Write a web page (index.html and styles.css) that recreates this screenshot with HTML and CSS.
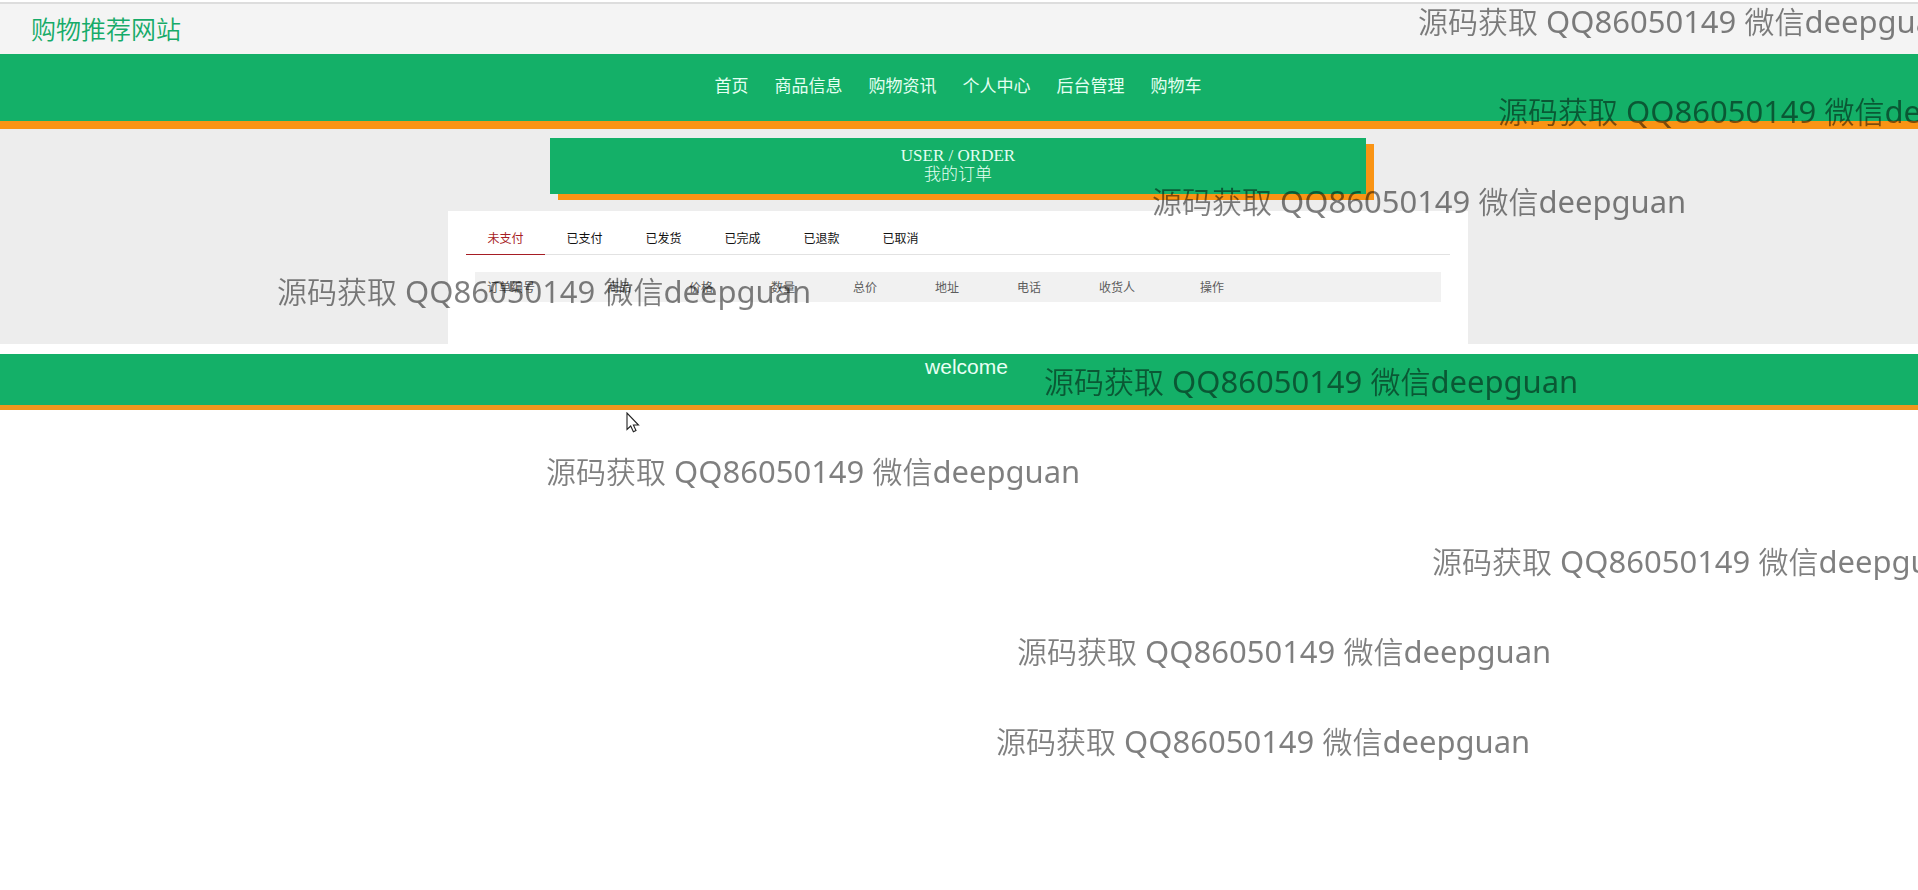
FILE: index.html
```html
<!DOCTYPE html>
<html lang="zh-CN">
<head>
<meta charset="utf-8">
<title>购物推荐网站</title>
<link rel="stylesheet" href="styles.css">
</head>
<body>
<header class="topbar"><a class="brand" href="#">购物推荐网站</a></header>
<nav class="nav" aria-label="主导航">
  <a href="#">首页</a>
  <a href="#">商品信息</a>
  <a href="#">购物资讯</a>
  <a href="#">个人中心</a>
  <a href="#">后台管理</a>
  <a href="#">购物车</a>
</nav>
<main class="main">
  <div class="content">
    <h1 class="title"><span>USER / ORDER</span><span>我的订单</span></h1>
    <section class="panel">
      <div class="tabs" role="tablist">
        <button class="tab tab-active" type="button" role="tab" aria-selected="true">未支付</button>
        <button class="tab" type="button" role="tab">已支付</button>
        <button class="tab" type="button" role="tab">已发货</button>
        <button class="tab" type="button" role="tab">已完成</button>
        <button class="tab" type="button" role="tab">已退款</button>
        <button class="tab" type="button" role="tab">已取消</button>
      </div>
      <table class="orders">
        <colgroup>
          <col class="col-id"><col class="col"><col class="col"><col class="col"><col class="col"><col class="col"><col class="col"><col class="col-name"><col>
        </colgroup>
        <thead>
          <tr><th scope="col">订单编号</th><th scope="col">商品</th><th scope="col">价格</th><th scope="col">数量</th><th scope="col">总价</th><th scope="col">地址</th><th scope="col">电话</th><th scope="col">收货人</th><th scope="col">操作</th></tr>
        </thead>
      </table>
    </section>
  </div>
</main>
<footer class="footer">welcome</footer>

<div class="marks" aria-hidden="true">
  <p class="mark m1">源码获取<span> QQ86050149 </span>微信<span>deepguan</span></p>
  <p class="mark m2">源码获取<span> QQ86050149 </span>微信<span>deepguan</span></p>
  <p class="mark m3">源码获取<span> QQ86050149 </span>微信<span>deepguan</span></p>
  <p class="mark m4">源码获取<span> QQ86050149 </span>微信<span>deepguan</span></p>
  <p class="mark m5">源码获取<span> QQ86050149 </span>微信<span>deepguan</span></p>
  <p class="mark m6">源码获取<span> QQ86050149 </span>微信<span>deepguan</span></p>
  <p class="mark m7">源码获取<span> QQ86050149 </span>微信<span>deepguan</span></p>
  <p class="mark m8">源码获取<span> QQ86050149 </span>微信<span>deepguan</span></p>
  <p class="mark m9">源码获取<span> QQ86050149 </span>微信<span>deepguan</span></p>
  <svg class="cursor" width="14" height="21" viewBox="0 0 14 21"><path d="M1 1V17.500L4.700 14L7.400 19.800L10 18.600L7.400 13H12.500Z" fill="#fff" stroke="#222" stroke-width="1.100"/></svg>
</div>
</body>
</html>
```

FILE: styles.css
```css
* {
  box-sizing: border-box;
}

body {
  margin: 0;
  background: #fff;
  font-family: "Noto Sans CJK SC", sans-serif;
  font-size: 12px;
}

a {
  color: inherit;
  text-decoration: none;
}

.topbar {
  margin-top: 2px;
  padding: 0 31px;
  border-top: 2px solid #ddd;
  background: #f4f4f4;
  color: #16ab69;
}

.brand {
  display: block;
  padding-bottom: 2px;
  font-size: 25px;
  font-weight: 350;
  line-height: 48px;
}

.nav {
  display: flex;
  justify-content: center;
  gap: 26px;
  padding: 0 2px 5px 0;
  border-bottom: 8px solid #fa9414;
  background: #14b068;
  color: #e4fff2;
  font-size: 17px;
  line-height: 62px;
}

.main {
  padding: 9px 2px 0 0;
  background: #ededed;
}

.content {
  width: 1020px;
  max-width: 100%;
  margin: 0 auto;
}

.title {
  display: flex;
  flex-direction: column;
  align-items: center;
  width: 80%;
  margin: 0 auto 17px;
  padding: 8px 0 10px;
  background: #14b068;
  box-shadow: 8px 6px #fa9414;
  color: #e4fff2;
  font-family: "Liberation Serif", "Noto Sans CJK SC", serif;
  font-size: 17px;
  font-weight: 300;
  line-height: 19px;
}

.panel {
  padding: 10px 18px 42px;
  background: #fff;
}

.tabs {
  display: flex;
  border-bottom: 1px solid #e2e2e2;
}

.tab {
  width: 79px;
  margin-bottom: -1px;
  padding: 0;
  border: 0;
  border-bottom: 1px solid transparent;
  background: none;
  color: #111;
  font: 12px/33px "Noto Sans CJK SC", sans-serif;
}

.tab-active {
  border-color: #a61d24;
  color: #a61d24;
}

.orders {
  width: calc(100% - 18px);
  margin: 17px 9px 0;
  border-collapse: collapse;
  table-layout: fixed;
  background: #f1f1f1;
  color: #5c5c5c;
}

.orders th {
  padding: 0 12px;
  font-weight: 400;
  line-height: 30px;
  text-align: left;
}

.col-id {
  width: 120px;
}

.col {
  width: 82px;
}

.col-name {
  width: 101px;
}

.footer {
  min-height: 56px;
  margin-top: 10px;
  padding-left: 15px;
  border-bottom: 5px solid #f0961e;
  background: #14b068;
  color: #e8fff4;
  font-family: "Liberation Sans", sans-serif;
  font-size: 21px;
  line-height: 26px;
  text-align: center;
}

/* Floating watermark layer */
.marks {
  position: fixed;
  inset: 0;
  overflow: hidden;
  pointer-events: none;
}

.mark {
  position: absolute;
  margin: 0;
  color: rgba(0, 0, 0, 0.5);
  font-size: 30px;
  font-weight: 350;
  line-height: 40px;
  white-space: nowrap;
}

.mark span {
  font-family: "Noto Sans", sans-serif;
  font-size: 31px;
  font-weight: 400;
  white-space: pre;
}

.m1 { left: 1418px; top: 0; }
.m2 { left: 1498px; top: 90px; }
.m3 { left: 1152px; top: 180px; }
.m4 { left: 277px; top: 270px; }
.m5 { left: 1044px; top: 360px; }
.m6 { left: 546px; top: 450px; }
.m7 { left: 1432px; top: 540px; }
.m8 { left: 1017px; top: 630px; }
.m9 { left: 996px; top: 720px; }

.cursor {
  position: absolute;
  left: 626px;
  top: 412px;
}
```
